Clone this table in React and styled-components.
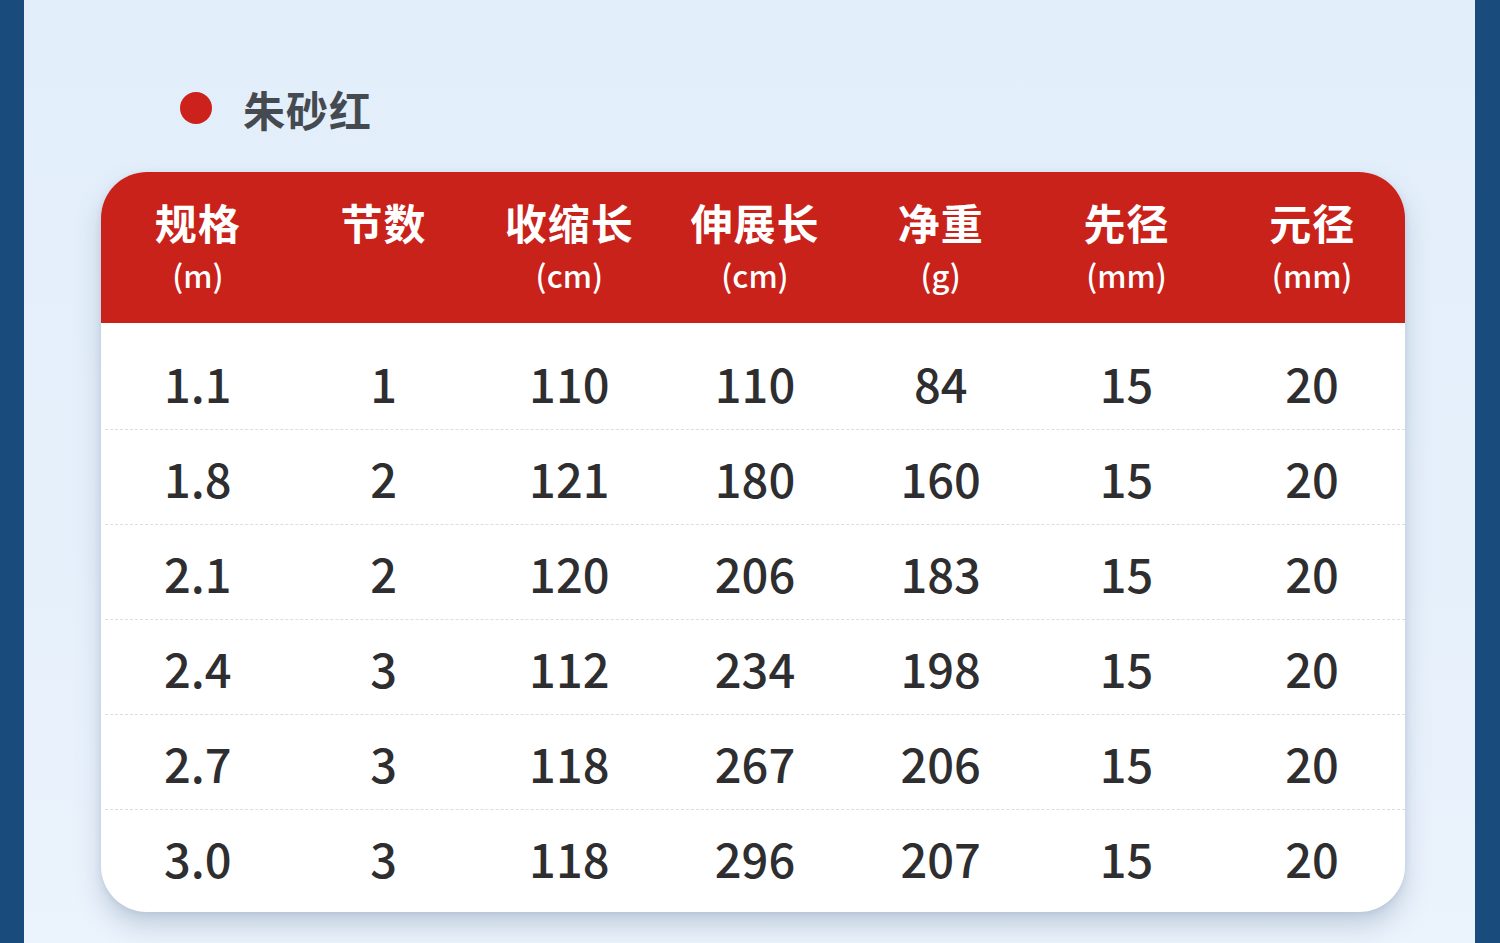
import React from 'react'
import styled, { createGlobalStyle } from 'styled-components'

const columns = [
    { name: '规格', unit: '(m)' },
    { name: '节数' },
    { name: '收缩长', unit: '(cm)' },
    { name: '伸展长', unit: '(cm)' },
    { name: '净重', unit: '(g)' },
    { name: '先径', unit: '(mm)' },
    { name: '元径', unit: '(mm)' },
]

const rows = [
    ['1.1', '1', '110', '110', '84', '15', '20'],
    ['1.8', '2', '121', '180', '160', '15', '20'],
    ['2.1', '2', '120', '206', '183', '15', '20'],
    ['2.4', '3', '112', '234', '198', '15', '20'],
    ['2.7', '3', '118', '267', '206', '15', '20'],
    ['3.0', '3', '118', '296', '207', '15', '20'],
]

const App = () => {
    return (
        <>
            <GlobalStyle />
            <StyledPage>
                <SideBar />
                <StyledMain>
                    <StyledTitleRow>
                        <StyledDot />
                        <StyledTitle>朱砂红</StyledTitle>
                    </StyledTitleRow>
                    <StyledCard>
                        <StyledHead>
                            {columns.map((col) => (
                                <StyledHeadCell key={col.name}>
                                    <StyledHeadName>{col.name}</StyledHeadName>
                                    {col.unit && <StyledHeadUnit>{col.unit}</StyledHeadUnit>}
                                </StyledHeadCell>
                            ))}
                        </StyledHead>
                        <StyledBody>
                            {rows.map((row, i) => (
                                <StyledRow key={i} last={i === rows.length - 1}>
                                    {row.map((v, j) => (
                                        <StyledCell key={j}>{v}</StyledCell>
                                    ))}
                                </StyledRow>
                            ))}
                        </StyledBody>
                    </StyledCard>
                </StyledMain>
                <SideBar right />
            </StyledPage>
        </>
    )
}

const GlobalStyle = createGlobalStyle`
    body {
        margin: 0;
        font-family: 'Noto Sans CJK SC', 'Noto Sans', sans-serif;
    }
`

const StyledPage = styled.div`
    display: flex;
    width: 1500px;
    height: 943px;
    overflow: hidden;
    background: #e5effa;
`

const SideBar = styled.div`
    width: ${(props) => (props.right ? '25px' : '24px')};
    flex-shrink: 0;
    background: #1a4b7d;
`

const StyledMain = styled.div`
    flex: 1;
    display: flex;
    flex-direction: column;
    padding: 77px 0 0 77px;
    background: linear-gradient(180deg, #e2eefa 0%, #e6f0fb 60%, #ebf3fc 100%);
`

const StyledTitleRow = styled.div`
    display: flex;
    align-items: center;
    gap: 31px;
    height: 62px;
    padding-left: 79px;
`

const StyledDot = styled.div`
    width: 32px;
    height: 32px;
    border-radius: 50%;
    background: #cc221b;
`

const StyledTitle = styled.div`
    font-size: 42px;
    font-weight: 700;
    color: #454a50;
    letter-spacing: 1px;
`

const StyledCard = styled.div`
    margin-top: 33px;
    width: 1304px;
    border-radius: 46px;
    overflow: hidden;
    background: #fff;
    box-shadow: 0 14px 24px rgba(120, 140, 170, 0.35), 0 2px 6px rgba(120, 140, 170, 0.2);
`

const StyledHead = styled.div`
    display: grid;
    grid-template-columns: repeat(7, 1fr);
    height: 151px;
    background: #c8221a;
    padding-left: 4px;
`

const StyledHeadCell = styled.div`
    display: flex;
    flex-direction: column;
    align-items: center;
    padding-top: 26px;
    color: #fff;
`

const StyledHeadName = styled.div`
    font-size: 42px;
    font-weight: 700;
    line-height: 48px;
    letter-spacing: 1px;
`

const StyledHeadUnit = styled.div`
    font-size: 31px;
    font-weight: 500;
    line-height: 38px;
    margin-top: 10px;
`

const StyledBody = styled.div`
    padding: 12px 0 7px 4px;
`

const StyledRow = styled.div`
    display: grid;
    grid-template-columns: repeat(7, 1fr);
    height: 95px;
    box-sizing: border-box;
    border-bottom: ${(props) => (props.last ? 'none' : '1px dashed #dedede')};
`

const StyledCell = styled.div`
    display: flex;
    align-items: center;
    justify-content: center;
    font-size: 47px;
    font-weight: 500;
    color: #2e2e30;
`

export default App
